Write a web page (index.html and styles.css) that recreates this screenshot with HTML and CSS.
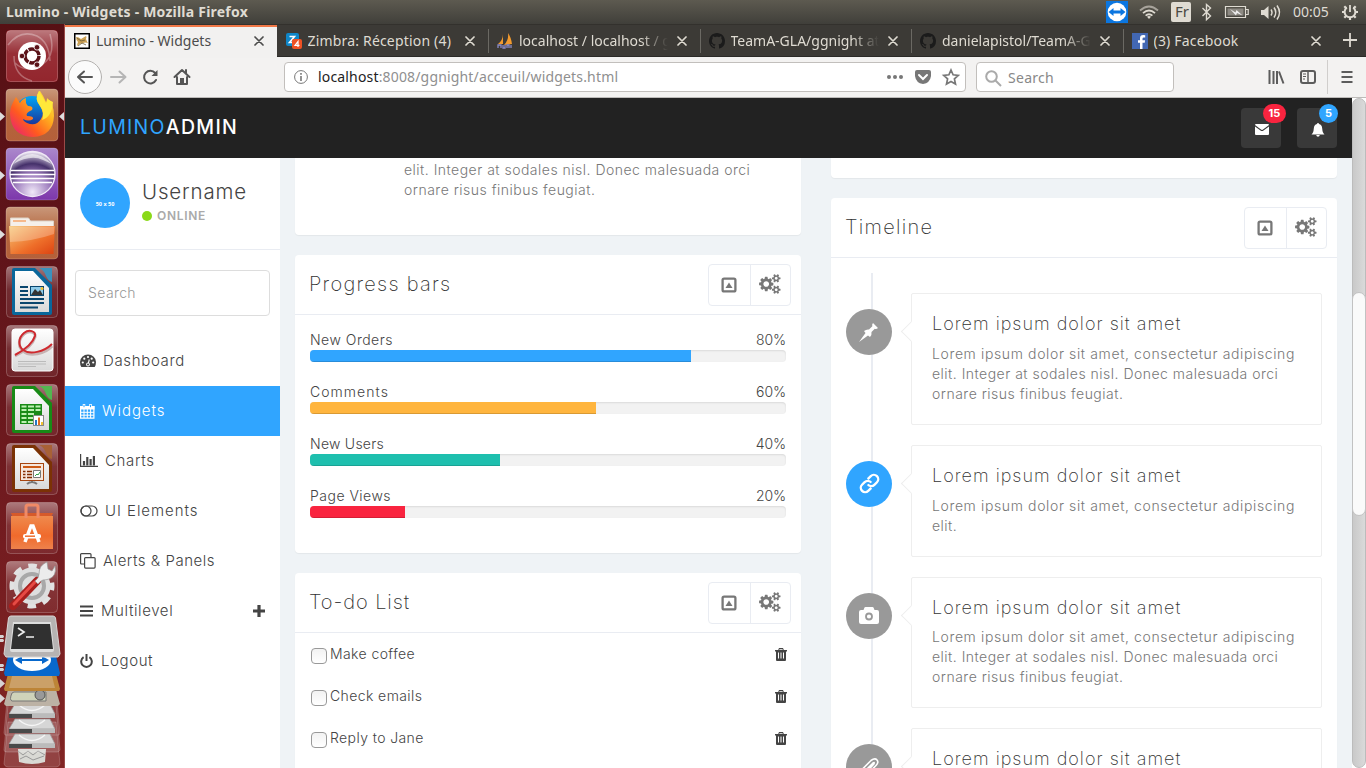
FILE: index.html
```html
<!DOCTYPE html>
<html lang="en">
<head>
<meta charset="utf-8">
<title>Lumino - Widgets</title>
<link rel="stylesheet" href="styles.css">
</head>
<body>
<svg width="0" height="0" class="defs">
  <defs>
    <linearGradient id="gloss" x1="0" y1="0" x2="0" y2="1"><stop offset="0" stop-color="#fff" stop-opacity=".42"/><stop offset=".45" stop-color="#fff" stop-opacity=".1"/><stop offset="1" stop-color="#fff" stop-opacity=".06"/></linearGradient>
    <linearGradient id="orangeTile" x1="0" y1="0" x2="0" y2="1"><stop offset="0" stop-color="#c9977a"/><stop offset=".5" stop-color="#b3653c"/><stop offset="1" stop-color="#b5603a"/></linearGradient>
    <linearGradient id="purpleTile" x1="0" y1="0" x2="0" y2="1"><stop offset="0" stop-color="#ab88cc"/><stop offset="1" stop-color="#7d37ab"/></linearGradient>
    <linearGradient id="folder" x1="0" y1="0" x2="1" y2="1"><stop offset="0" stop-color="#f6c877"/><stop offset=".6" stop-color="#ee6f2a"/><stop offset="1" stop-color="#dc4312"/></linearGradient>
    <linearGradient id="fox" x1="1" y1="0" x2="0" y2="1"><stop offset="0" stop-color="#fff44f"/><stop offset=".35" stop-color="#ffb01f"/><stop offset=".65" stop-color="#ff5a1f"/><stop offset="1" stop-color="#e31587"/></linearGradient>
    <linearGradient id="globe" x1="0" y1="0" x2="0" y2="1"><stop offset="0" stop-color="#00a5f5"/><stop offset="1" stop-color="#20218a"/></linearGradient>
    <radialGradient id="orb" cx=".5" cy=".9" r=".9"><stop offset="0" stop-color="#f0e8f8"/><stop offset=".45" stop-color="#9d7cbd"/><stop offset=".7" stop-color="#45306a"/><stop offset="1" stop-color="#f5f0fa"/></radialGradient>
    <linearGradient id="paper" x1="0" y1="0" x2="0" y2="1"><stop offset="0" stop-color="#fff"/><stop offset="1" stop-color="#d9d9d9"/></linearGradient>
    <linearGradient id="bag" x1="0" y1="0" x2="0" y2="1"><stop offset="0" stop-color="#ef8a4d"/><stop offset=".6" stop-color="#f06a2c"/><stop offset="1" stop-color="#ee824c"/></linearGradient>
    <g id="tile"><rect x="6.5" y="6.5" width="51" height="51" rx="4" fill="url(#gloss)" stroke="#fff" stroke-opacity=".22"/></g>
    <g id="running"><path d="M0 29v9l5-4.500z" fill="#ddd"/></g>
    <g id="mark-github"><path d="M8 0C3.580 0 0 3.580 0 8c0 3.540 2.290 6.530 5.470 7.590.4.070.55-.17.55-.38 0-.19-.01-.82-.01-1.490-2.010.37-2.530-.49-2.690-.94-.09-.23-.48-.94-.82-1.130-.28-.15-.68-.52-.01-.53.63-.01 1.080.58 1.230.82.72 1.210 1.870.87 2.330.66.07-.52.28-.87.51-1.070-1.780-.2-3.640-.89-3.640-3.950 0-.87.31-1.590.82-2.150-.08-.2-.36-1.020.08-2.120 0 0 .67-.21 2.200.82.64-.18 1.320-.27 2-.27s1.360.09 2 .27c1.530-1.040 2.200-.82 2.200-.82.44 1.100.16 1.920.08 2.120.51.56.82 1.270.82 2.150 0 3.070-1.870 3.750-3.650 3.950.29.25.54.73.54 1.480 0 1.070-.01 1.930-.01 2.200 0 .21.15.46.55.38A8.010 8.010 0 0 0 16 8c0-4.420-3.580-8-8-8z" fill="#1b1b1b"/></g>
    <g id="cogs"><path d="M896 896q0-106-75-181t-181-75-181 75-75 181 75 181 181 75 181-75 75-181zm768 512q0-52-38-90t-90-38-90 38-38 90q0 53 37.500 90.500t90.500 37.500 90.500-37.500 37.500-90.500zm0-1024q0-52-38-90t-90-38-90 38-38 90q0 53 37.500 90.500t90.500 37.500 90.500-37.500 37.500-90.500zm-384 421v185q0 10-7 19.500t-16 10.500l-155 24q-11 35-32 76 34 48 90 115 7 11 7 20 0 12-7 19-23 30-82.500 89.500t-78.500 59.500q-11 0-21-7l-115-90q-37 19-77 31-11 108-23 155-7 24-30 24h-186q-11 0-20-7.500t-10-17.500l-23-153q-34-10-75-31l-118 89q-7 7-20 7-11 0-21-8-144-133-144-160 0-9 7-19 10-14 41-53t47-61q-23-44-35-82l-152-24q-10-1-17-9.500t-7-19.500v-185q0-10 7-19.500t16-10.500l155-24q11-35 32-76-34-48-90-115-7-11-7-20 0-12 7-20 22-30 82-89t79-59q11 0 21 7l115 90q34-18 77-32 11-108 23-154 7-24 30-24h186q11 0 20 7.500t10 17.500l23 153q34 10 75 31l118-89q8-7 20-7 11 0 21 8 144 133 144 160 0 8-7 19-12 16-42 54t-45 60q23 48 34 82l152 23q10 2 17 10.500t7 19.500zm640 533v140q0 16-149 31-12 27-30 52 51 113 51 138 0 4-4 7-122 71-124 71-8 0-46-47t-52-68q-20 2-30 2t-30-2q-14 21-52 68t-46 47q-2 0-124-71-4-3-4-7 0-25 51-138-18-25-30-52-149-15-149-31v-140q0-16 149-31 13-29 30-52-51-113-51-138 0-4 4-7 4-2 35-20t59-34 30-16q8 0 46 46.500t52 67.500q20-2 30-2t30 2q51-71 92-112l6-2q4 0 124 70 4 3 4 7 0 25-51 138 17 23 30 52 149 15 149 31zm0-1024v140q0 16-149 31-12 27-30 52 51 113 51 138 0 4-4 7-122 71-124 71-8 0-46-47t-52-68q-20 2-30 2t-30-2q-14 21-52 68t-46 47q-2 0-124-71-4-3-4-7 0-25 51-138-18-25-30-52-149-15-149-31v-140q0-16 149-31 13-29 30-52-51-113-51-138 0-4 4-7 4-2 35-20t59-34 30-16q8 0 46 46.500t52 67.500q20-2 30-2t30 2q51-71 92-112l6-2q4 0 124 70 4 3 4 7 0 25-51 138 17 23 30 52 149 15 149 31z"/></g>
    <g id="close"><path d="M1 1l8 8M9 1l-8 8" fill="none" stroke="currentColor" stroke-width="1.700" stroke-linecap="round"/></g>
    <g id="trash"><path d="M0 2h3.200l.8-2h4l.8 2H12v1.500h-1V12q0 1-1 1H2q-1 0-1-1V3.500H0zM4.500 1.200L4.200 2h3.600l-.3-.8z" fill="#444" fill-rule="evenodd"/><path d="M3 4.500h1v6H3zM5.500 4.500h1v6h-1zM8 4.500h1v6H8z" fill="#fff"/></g>
  </defs>
</svg>

<header class="sysbar">
  <span class="win-title">Lumino - Widgets - Mozilla Firefox</span>
  <svg class="indicators" width="260" height="24" viewBox="1106 0 260 24">
    <rect x="1106" y="1" width="22" height="22" fill="#0b76e0"/><circle cx="1117" cy="12" r="9.300" fill="#fff"/><path d="M1108.500 12l5-4v2.600h7V8l5 4-5 4v-2.600h-7V16z" fill="#0b76e0"/>
    <g fill="none" stroke="#dfdbd2" stroke-width="1.800"><path d="M1140 10.500q9-8 18 0" stroke-opacity=".6"/><path d="M1143 13.200q6-5.500 12 0"/><path d="M1145.600 15.700q3.400-3 6.800 0"/></g><path d="M1149 19l-2-2.300q2-1.400 4 0z" fill="#dfdbd2"/>
    <rect x="1171" y="2" width="20" height="20" rx="2" fill="#dfdbd2"/>
    <path d="M1202.500 8l8 8-4 3.700V4.500l4 3.500-8 8" fill="none" stroke="#dfdbd2" stroke-width="1.400"/>
    <path d="M1225.500 6.500h20v11h-20zM1246 9.500h2.200v5h-2.200" fill="none" stroke="#dfdbd2" stroke-width="1.200"/><rect x="1227.500" y="8.500" width="16" height="7" fill="#8d8a83"/><path d="M1230 9l5.500 3.500 1-2.500 6 5.500-5.500-2.500-1 2.500z" fill="#eee"/>
    <path d="M1261 10h3l4.500-4v13l-4.500-4h-3z" fill="#dfdbd2"/><g fill="none" stroke="#dfdbd2" stroke-width="1.500"><path d="M1271 9.500q2 3 0 6M1274 7.500q3.500 5 0 10M1277 5.500q5 7 0 14"/></g>
    <g fill="none" stroke="#dfdbd2"><path d="M1346.800 7.600a5.400 5.400 0 1 0 6.400 0" stroke-width="2"/><path d="M1350 5v7" stroke-width="1.800"/><path d="M1342 12h2.500M1355.500 12h2.500M1350 17.500v2.500M1344.300 17.700l2-2M1355.700 17.700l-2-2M1344.300 6.300l2 2M1355.700 6.300l-2 2" stroke-width="2.200"/></g>
    <text x="1175" y="17" class="lang">Fr</text>
    <text x="1293" y="17" class="clock">00:05</text>
  </svg>
</header>

<div class="desktop">
<aside class="launcher">
  <svg width="65" height="59"><rect x="6" y="6" width="52" height="52" rx="4" fill="#8c1820"/><use href="#tile"/><g fill="none" stroke="#fff" stroke-opacity=".3" stroke-width="1.500"><path d="M8 21q12-16 29-9 12 6 13 25M50 10q7 24-12 33-14 5-23-4M14 32q0 20 18 25"/></g><circle cx="32" cy="32" r="14" fill="#fff"/><circle cx="32" cy="32" r="7" fill="none" stroke="#5a1218" stroke-width="3.500" stroke-dasharray="13.600 1.060"/><g fill="#5a1218" stroke="#fff" stroke-width=".8"><circle cx="22" cy="32" r="2.800"/><circle cx="37" cy="23.300" r="2.800"/><circle cx="37" cy="40.700" r="2.800"/></g></svg>
  <svg width="65" height="59"><rect x="6" y="6" width="52" height="52" rx="4" fill="url(#orangeTile)" stroke="#fff" stroke-opacity=".2"/><circle cx="32" cy="30" r="17" fill="url(#globe)"/><path d="M39 8q-5 8 1 15 5 7 1 13-5 8-14 4-4-2-4-4 6 3 10 0 1-3-6-3-2-3 5-6 2-4-4-4-3-3-2-8-5 2-6 5l-4-6q-6 9-6 17 1 22 23 23 20-1 21-21 0-13-7-18 0 3-1 4-3-7-6-11z" fill="url(#fox)"/><path d="M39 8q-5 8 1 15 5 7 2 14 10-3 11-18l-6-3q0 3-1 4-4-7-7-12z" fill="#ffe83a"/><use href="#running"/><path d="M64 29v9l-5-4.500z" fill="#ddd"/></svg>
  <svg width="65" height="59"><rect x="6" y="6" width="52" height="52" rx="4" fill="url(#purpleTile)" stroke="#fff" stroke-opacity=".2"/><circle cx="32.500" cy="32" r="22.500" fill="url(#orb)" stroke="#f0eaf6" stroke-width="1.300"/><path d="M13 22q19-20 39 0l-9-4q-12-6-30 4z" fill="#fff" opacity=".6"/><path d="M11 28.500h43M10 32.500h45M11 36.500h43M13 40.500h39" stroke="#fff" stroke-width="1.300"/><use href="#running"/></svg>
  <svg width="65" height="59"><rect x="6" y="6" width="52" height="52" rx="4" fill="url(#orangeTile)" stroke="#fff" stroke-opacity=".2"/><path d="M10.500 25v-8h18l2 3h23v8h-43z" fill="#f5f0ea" stroke="#ddd3c8"/><path d="M13 20h13" stroke="#f5b98c" stroke-width="2"/><path d="M9 25h46l-1.500 28h-43z" fill="url(#folder)"/><path d="M9.500 25.500h45L54 33q-20 7-44 8z" fill="#fff" opacity=".25"/><use href="#running"/></svg>
  <svg width="65" height="59"><use href="#tile"/><path d="M14 8h21l17 17v28q0 2-2 2H14q-2 0-2-2V10q0-2 2-2z" fill="#09679b"/><path d="M39 8h13v14q-4-1-6-6-2-6-7-8z" fill="#3b92bd"/><path d="M15 11h18l16 17v24H15z" fill="url(#paper)"/><path d="M20 27h8M20 31h8M20 35h8M20 39h24M20 43h24M20 47.500h18" stroke="#09466e" stroke-width="1.800"/><rect x="30.500" y="26.500" width="13" height="9" fill="#8ecbe9" stroke="#09466e"/><path d="M31 35l4-6 3 3 2-2 3 5z" fill="#333"/><circle cx="42" cy="28.500" r="1.500" fill="#f3c230"/></svg>
  <svg width="65" height="59"><use href="#tile"/><rect x="12" y="10" width="41" height="42" rx="3" fill="url(#paper)" stroke="#fff"/><path d="M15 37q17-9 20-19c1-5-6-7-11-3-6 5-6 13-1 17 7 6 22 3 29-5" fill="none" stroke="#c7b3b3" stroke-width="3"/><path d="M15 36q17-9 20-19c1-5-6-7-11-3-6 5-6 13-1 17 7 5 21 2 29-6" fill="none" stroke="#cf2a2f" stroke-width="2"/><path d="M18 42.500h28M18 45h28M18 47.500h18" stroke="#bbb"/></svg>
  <svg width="65" height="59"><use href="#tile"/><path d="M14 8h21l17 17v28q0 2-2 2H14q-2 0-2-2V10q0-2 2-2z" fill="#188a16"/><path d="M39 8h13v14q-4-1-6-6-2-6-7-8z" fill="#53b650"/><path d="M15 11h18l16 17v24H15z" fill="url(#paper)"/><rect x="20" y="26" width="22" height="20" fill="#188a16"/><path d="M21.500 27.500h5v2h-5zm6.500 0h6v2h-6zm7.500 0h5v2h-5zM21.500 31h5v2h-5zm6.500 0h6v2h-6zm7.500 0h5v2h-5zM21.500 35h5v2h-5zm6.500 0h6v2h-6zM21.500 39h5v2h-5zm6.500 0h6v2h-6zM21.500 43h5v2h-5zm6.500 0h6v2h-6z" fill="#bdf0b2"/><rect x="33.500" y="37.500" width="10" height="10" fill="#fff" stroke="#888"/><path d="M35 42h2v5h-2z" fill="#2577c4"/><path d="M38 39.500h2V47h-2z" fill="#e06c21"/><path d="M41 44h2v3h-2z" fill="#f3c230"/></svg>
  <svg width="65" height="59"><use href="#tile"/><path d="M14 8h21l17 17v28q0 2-2 2H14q-2 0-2-2V10q0-2 2-2z" fill="#7b3205"/><path d="M39 8h13v14q-4-1-6-6-2-6-7-8z" fill="#a86136"/><path d="M15 11h18l16 17v24H15z" fill="url(#paper)"/><rect x="20.500" y="26.500" width="23" height="17" fill="#f6e7dc" stroke="#a64510"/><path d="M23 30h18" stroke="#cc5a15" stroke-width="2"/><path d="M23 34.500h2.500M23 37.500h2.500M23 40.500h2.500M27 34.500h5M27 37.500h5M27 40.500h5" stroke="#842d00" stroke-width="1.700"/><path d="M33.500 33.500h7v7h-7z" fill="#fff" stroke="#777"/><path d="M35 39l2-2 1 1 2-3" fill="none" stroke="#31a043"/><path d="M32 44v2M27 47q5-4 10 0" stroke="#777" stroke-width="2" fill="none"/></svg>
  <svg width="65" height="59"><use href="#tile"/><path d="M11 17h42l-2 5H13z" fill="#d65a2a"/><path d="M11 20h42v33H11z" fill="url(#bag)"/><path d="M26 22V11q0-2 2-2h8q2 0 2 2v11" fill="none" stroke="#f08a66" stroke-width="3"/><path d="M25 46l6-16h2l6 16" fill="none" stroke="#fff" stroke-width="3.500"/><rect x="23" y="38" width="18" height="4.500" rx="2" fill="#fff"/><path d="M25 40.200h10" stroke="#ef6e30" stroke-width="1.500"/></svg>
  <svg width="65" height="59"><use href="#tile"/><circle cx="32" cy="31" r="20" fill="none" stroke="#e2e2e2" stroke-width="5" stroke-dasharray="8.500 7.200" stroke-dashoffset="4.250"/><circle cx="32" cy="31" r="18.500" fill="#dedede"/><circle cx="32" cy="31" r="12" fill="none" stroke="#a8a8a8" stroke-width="4"/><path d="M37 26l-24 25" stroke="#a81f1d" stroke-width="8" stroke-linecap="round"/><path d="M35 27L14 49" stroke="#e64a44" stroke-width="3" stroke-linecap="round"/><path d="M35 26q4-3 4-7 0-9 8-12l1 7 4 2 3-5q2 10-6 13-3 1-6 1-3 1-5 4z" fill="#ececec" stroke="#999" stroke-width=".7"/></svg>
  <svg width="65" height="154" viewBox="0 614 65 154">
    <path d="M8 722h48l4 42q-1 3-4 3H8q-3 0-4-3z" fill="#fff" fill-opacity=".14" stroke="#fff" stroke-opacity=".2"/>
    <path d="M18 749h28l-1 13q-13 4-26 0z" fill="#d9d9d4"/><path d="M18 751l5 4 5-4 5 4 5-4 7 4M20 759l6-3 7 4 11-4" fill="none" stroke="#999"/>
    <path d="M8 705h48l4 45q-1 2-3 2H7q-3 0-3-2zM8 690h48l4 43-1 2H5l-1-2z" fill="#fff" fill-opacity=".14" stroke="#fff" stroke-opacity=".2"/>
    <g id="drive"><path d="M15 704h35l5 10H9z" fill="#d6d6d6" stroke="#999" stroke-width=".7"/><path d="M19 705q13 11 26 0" fill="none" stroke="#f5f5f5" stroke-width="1.500"/><path d="M9 714h46v4H9z" fill="#4a4a4a"/><path d="M32 714h23v4H32z" fill="#bbb"/></g>
    <use href="#drive" y="15"/><use href="#drive" y="30"/>
    <path d="M8 690h48l4 14-2 2H6l-2-2z" fill="#bcb2a5"/><path d="M14 692h32v9H12q-3-1 0-8z" fill="#cfd3ba" stroke="#777"/><circle cx="40" cy="695" r="5" fill="#999" stroke="#555"/>
    <path d="M8 674h48l4 15-1 2H5l-1-2z" fill="#bd8437"/><path d="M12 676h40l3 12H9z" fill="#cba068"/>
    <path d="M8 656h48l4 17-1 3H5l-1-3z" fill="#0868cc"/><ellipse cx="32" cy="660" rx="19" ry="11" fill="#fff"/><path d="M15 660l7-4v3h20v-3l7 4-7 4v-3H22v3z" fill="#0868cc"/>
    <path d="M11 616h42q2 0 2.500 2l4.500 36-2 3H6l-2-3 4.500-36q.5-2 2.500-2z" fill="#b6b3b3" stroke="#d8d5d5"/><path d="M13 622h38l3 28q0 2-2 2H12q-2 0-2-2z" fill="#ddd"/><path d="M14 624h36l3 25H11z" fill="#303030"/><path d="M18 628l6 4-6 4M26 637h8" fill="none" stroke="#eee" stroke-width="1.700"/>
    <path d="M0 635h3q2 1.500 0 3H0zM0 639h3q2 1.500 0 3H0zM0 664h3q2 1.500 0 3H0zM0 668h3q2 1.500 0 3H0zM0 679v9l5-4.500zM0 694v9l5-4.500z" fill="#d6d2d2"/>
  </svg>
</aside>

<div class="browser">
  <nav class="tabs">
    <div class="tab active"><svg width="16" height="16"><rect x=".75" y=".75" width="14.500" height="14.500" fill="#fff" stroke="#000" stroke-width="1.500"/><path d="M2 4q3 0 5 2l5-3q1 1 0 3 1 3 2 4-3-1-5 0-3 0-6 3 0-2 1-4-2-2-2-5z" fill="#cda255"/><path d="M3 5l4 3 4-1M4 13l4-3 4 2" fill="none" stroke="#6a5a36" stroke-width=".8"/></svg><span class="tab-text">Lumino - Widgets</span><svg class="x" width="10" height="10"><use href="#close"/></svg></div>
    <div class="tab"><svg width="16" height="16"><rect width="13" height="13" rx="2" fill="#0f86c8"/><path d="M3.500 3.500h5l-5 6h5" fill="none" stroke="#fff" stroke-width="1.600"/><rect x="6" y="6" width="10" height="10" rx="2" fill="#ef5123"/><path d="M12 14V8.500L9 12.300h4.500" fill="none" stroke="#fff" stroke-width="1.200"/></svg><span class="tab-text mail">Zimbra: Réception (4)</span><svg class="x" width="10" height="10"><use href="#close"/></svg></div>
    <div class="tab"><svg width="16" height="16"><path d="M6 1Q6 7 1 11h5zM11 0q1 7-4 12l8-1Q14 4 11 0z" fill="#f29a2e"/><path d="M1 15v-3h3v3M6 12v3h2v-3M10 15v-3h2v3M14 12v3" fill="none" stroke="#8b8bc6" stroke-width="1.300"/></svg><span class="tab-text fade">localhost / localhost / g</span><svg class="x" width="10" height="10"><use href="#close"/></svg></div>
    <div class="tab"><svg width="16" height="16"><use href="#mark-github"/></svg><span class="tab-text fade">TeamA-GLA/ggnight at</span><svg class="x" width="10" height="10"><use href="#close"/></svg></div>
    <div class="tab"><svg width="16" height="16"><use href="#mark-github"/></svg><span class="tab-text fade">danielapistol/TeamA-G</span><svg class="x" width="10" height="10"><use href="#close"/></svg></div>
    <div class="tab"><svg width="16" height="16"><rect width="16" height="16" fill="#4267b2"/><path d="M10.500 16V9.800h2.200l.4-2.500h-2.600V5.700q0-1.200 1.300-1.200h1.400V2.300q-5.200-1-5.200 3v2H6v2.500h2V16z" fill="#fff"/></svg><span class="tab-text mail">(3) Facebook</span><svg class="x" width="10" height="10"><use href="#close"/></svg></div>
    <svg class="newtab" width="14" height="14"><path d="M7 0v14M0 7h14" stroke="#ddd9d0" stroke-width="1.800"/></svg>
  </nav>
  <div class="toolbar">
    <div class="nav-buttons">
      <svg width="140" height="40" viewBox="65 57 140 40" fill="none" stroke-linecap="round" stroke-linejoin="round"><circle cx="85" cy="77" r="16.500" fill="#fbfbfb" stroke="#b3b1af"/><path d="M92 77H79M84 71.500L78 77l6 5.500" stroke="#555" stroke-width="2"/><path d="M111 77h13M119.500 71.500l6 5.500-6 5.500" stroke="#b5b5b5" stroke-width="2"/><path d="M156 80a6.300 6.300 0 1 1-.8-7" stroke="#555" stroke-width="2"/><path d="M157.500 70v6h-6z" fill="#555"/><path d="M174.500 77l7.500-7 7.500 7M177 77v7h10v-7M186 70v3" stroke="#555" stroke-width="2"/><path d="M180 78h4v6h-4z" fill="#555"/></svg>
    </div>
    <div class="urlbar">
      <svg width="14" height="14" fill="none" stroke="#777"><circle cx="7" cy="7" r="6.400"/><path d="M7 6v5M7 3v1.700" stroke-width="1.600"/></svg>
      <span class="url"><b>localhost</b>:8008/ggnight/acceuil/widgets.html</span>
      <svg class="url-actions" width="73" height="18" viewBox="887 68 73 18"><g fill="#777"><circle cx="889" cy="77" r="2"/><circle cx="895" cy="77" r="2"/><circle cx="901" cy="77" r="2"/><path d="M917 70h12q2 0 2 2v4q-1 7-8 8-7-1-8-8v-4q0-2 2-2z"/></g><path d="M919 75l4 4 4-4" fill="none" stroke="#fff" stroke-width="2" stroke-linecap="round"/><path d="M951 70l2.100 4.800 5.200.6-3.900 3.500 1.100 5.100-4.500-2.600-4.500 2.600 1.100-5.100-3.900-3.500 5.200-.6z" fill="none" stroke="#777" stroke-width="1.700"/></svg>
    </div>
    <div class="searchbar"><svg width="17" height="17" fill="none" stroke="#aaa" stroke-width="2"><circle cx="6.500" cy="6.500" r="5.300"/><path d="M10.500 10.500l5.500 5.500"/></svg><span class="search-text">Search</span></div>
    <svg class="tools" width="100" height="40" viewBox="1266 57 100 40" fill="none" stroke="#5c5c5c" stroke-width="2"><path d="M1269.500 70v14M1273.500 71v13M1277 71v13M1279 71.500l4.500 12"/><rect x="1301" y="71" width="14" height="12" rx="2"/><path d="M1308 71v12" stroke-width="1.500"/><path d="M1303 74h3M1303 76.500h3M1303 79h2" stroke-width="1"/><path d="M1327.500 60v34" stroke="#d0cecc" stroke-width="1"/><path d="M1341.500 72h11M1341.500 77h11M1341.500 82h11"/></svg>
  </div>

  <div class="viewport">
    <div class="page">
      <div class="navbar">
        <div class="brand"><span>LUMINO</span><em>ADMIN</em></div>
        <div class="alerts">
          <a class="alert"><svg width="14" height="11"><path d="M0 1q0-1 1-1h12q1 0 1 1L8 5.500q-1 .8-2 0zM0 2.600l5.500 4q1.500 1 3 0l5.500-4V10q0 1-1 1H1q-1 0-1-1z" fill="#fff"/></svg><span class="badge red">15</span></a>
          <a class="alert"><svg width="14" height="14"><path d="M7 0q1 0 1 1 3 .8 3.200 4.500Q11.500 10 13.500 11.500H.5Q2.500 10 2.800 5.500 3 1.800 6 1q0-1 1-1zM5.200 12h3.600q-.3 1.800-1.800 1.800T5.200 12z" fill="#fff"/></svg><span class="badge blue">5</span></a>
        </div>
      </div>
      <div class="content">
        <aside class="sidebar">
          <div class="profile">
            <div class="avatar">50 x 50</div>
            <div><div class="username">Username</div><div class="status"><i class="dot"></i><span>ONLINE</span></div></div>
          </div>
          <div class="side-search">Search</div>
          <ul class="menu">
            <li><svg width="16" height="14"><path d="M0 8a8 7.500 0 0 1 16 0q0 3-1.300 5H1.300Q0 11 0 8z" fill="#444"/><g fill="#fff"><circle cx="2.800" cy="8.500" r="1.100"/><circle cx="4.300" cy="4.700" r="1.100"/><circle cx="8" cy="3" r="1.100"/><circle cx="11.700" cy="4.700" r="1.100"/><circle cx="13.200" cy="8.500" r="1.100"/><circle cx="8" cy="10.500" r="1.900"/></g><path d="M8 10.500L9.300 5.500" stroke="#fff" stroke-width="1.100"/><circle cx="8" cy="10.500" r="1" fill="#444"/></svg><span>Dashboard</span></li>
            <li class="on"><svg width="15" height="15"><path d="M.6 2.600h13.300v11.600H.6z" fill="none" stroke="#fff" stroke-width="1.200"/><path d="M0 2h14.500v3.500H0z" fill="#fff"/><path d="M.6 8.300h13.300M.6 11.200h13.300M4 5v9M7.300 5v9M10.600 5v9" stroke="#fff"/><path d="M4 0v4M10.500 0v4" stroke="#fff" stroke-width="2.500"/><path d="M4 .8v2.400M10.500 .8v2.400" stroke="#30a5ff"/></svg><span class="wide">Widgets</span></li>
            <li><svg width="18" height="14"><path d="M.6 0v12.400H18" fill="none" stroke="#444" stroke-width="1.200"/><path d="M4 7v4.500M7.300 3v8.500M10.600 5v6.500M13.900 2v9.500" stroke="#444" stroke-width="2.200"/></svg><span>Charts</span></li>
            <li><svg width="18" height="12" fill="none" stroke="#444" stroke-width="1.200"><path d="M6 1a5 5 0 0 0 0 10h6a5 5 0 0 0 0-10z"/><circle cx="6" cy="6" r="5"/></svg><span class="wide">UI Elements</span></li>
            <li><svg width="16" height="16" fill="none" stroke="#444" stroke-width="1.200"><rect x="4.600" y="4.600" width="10.500" height="10.500" rx="1"/><path d="M4 11H1.600q-1 0-1-1V1.600q0-1 1-1H10q1 0 1 1V4"/></svg><span class="snug">Alerts &amp; Panels</span></li>
            <li><svg width="13" height="12"><path d="M0 1.500h13M0 6h13M0 10.500h13" stroke="#444" stroke-width="2.200"/></svg><span class="indent">Multilevel</span><svg class="plus" width="12" height="12"><path d="M6 0v12M0 6h12" stroke="#444" stroke-width="3.200"/></svg></li>
            <li><svg width="13" height="14" fill="none" stroke="#444" stroke-width="2"><path d="M3.600 3.200a5.300 5.300 0 1 0 5.800 0"/><path d="M6.500 0v7"/></svg><span class="indent">Logout</span></li>
          </ul>
        </aside>
        <main class="columns">
          <section class="col">
            <div class="card article"><p>elit. Integer at sodales nisl. Donec malesuada orci<br>ornare risus finibus feugiat.</p></div>
            <div class="card progress-card">
              <div class="card-head"><h2>Progress bars</h2><div class="btns"><span><svg width="16" height="16"><rect x="1.600" y="1.600" width="12.800" height="12.800" rx="1.500" fill="none" stroke="#777" stroke-width="2.300"/><path d="M4.500 11L8 5.500l3.500 5.500z" fill="#777"/></svg></span><span><svg width="23" height="20" viewBox="0 0 2048 1792" fill="#777"><use href="#cogs"/></svg></span></div></div>
              <div class="bars">
                <div class="bar-label"><span>New Orders</span><span class="pc">80%</span></div><div class="track"><div class="fill f-blue" style="width:80%"></div></div>
                <div class="bar-label"><span class="loose">Comments</span><span class="pc">60%</span></div><div class="track"><div class="fill f-orange" style="width:60%"></div></div>
                <div class="bar-label"><span class="tight">New Users</span><span class="pc">40%</span></div><div class="track"><div class="fill f-teal" style="width:40%"></div></div>
                <div class="bar-label"><span>Page Views</span><span class="pc">20%</span></div><div class="track"><div class="fill f-red" style="width:20%"></div></div>
              </div>
            </div>
            <div class="card todo-card">
              <div class="card-head"><h2 class="h-todo">To-do List</h2><div class="btns"><span><svg width="16" height="16"><rect x="1.600" y="1.600" width="12.800" height="12.800" rx="1.500" fill="none" stroke="#777" stroke-width="2.300"/><path d="M4.500 11L8 5.500l3.500 5.500z" fill="#777"/></svg></span><span><svg width="23" height="20" viewBox="0 0 2048 1792" fill="#777"><use href="#cogs"/></svg></span></div></div>
              <div class="todo"><i class="check"></i><span>Make coffee</span><svg width="12" height="13"><use href="#trash"/></svg></div>
              <div class="todo"><i class="check"></i><span>Check emails</span><svg width="12" height="13"><use href="#trash"/></svg></div>
              <div class="todo"><i class="check"></i><span>Reply to Jane</span><svg width="12" height="13"><use href="#trash"/></svg></div>
            </div>
          </section>
          <section class="col">
            <div class="card stub"></div>
            <div class="card timeline-card">
              <div class="card-head"><h2>Timeline</h2><div class="btns"><span><svg width="16" height="16"><rect x="1.600" y="1.600" width="12.800" height="12.800" rx="1.500" fill="none" stroke="#777" stroke-width="2.300"/><path d="M4.500 11L8 5.500l3.500 5.500z" fill="#777"/></svg></span><span><svg width="23" height="20" viewBox="0 0 2048 1792" fill="#777"><use href="#cogs"/></svg></span></div></div>
              <div class="timeline">
                <div class="event"><div class="mark"><svg width="20" height="20"><path d="M0 20l6.500-9-1.500-2q2.500-2 5-1.500l3.300-3.300q-.6-1.600.7-3.200L19 6q-1.600 1.300-3.200.7L12.500 10q.5 2.500-1.500 5l-2-1.500z" fill="#fff"/></svg></div><div class="panel"><h4>Lorem ipsum dolor sit amet</h4><p><span class="first">Lorem ipsum dolor sit amet, consectetur adipiscing</span><br>elit. Integer at sodales nisl. Donec malesuada orci<br>ornare risus finibus feugiat.</p></div></div>
                <div class="event"><div class="mark blue"><svg width="21" height="21" viewBox="0 0 24 24" fill="none" stroke="#fff" stroke-width="2.700"><path d="M10 13a5 5 0 0 0 7.540.540l3-3a5 5 0 0 0-7.070-7.070l-3.500 3.500"/><path d="M14 11a5 5 0 0 0-7.540-.540l-3 3a5 5 0 0 0 7.070 7.070l3.500-3.500"/></svg></div><div class="panel"><h4>Lorem ipsum dolor sit amet</h4><p><span class="first">Lorem ipsum dolor sit amet, consectetur adipiscing</span><br>elit.</p></div></div>
                <div class="event"><div class="mark"><svg width="20" height="17"><path d="M2 3h2.500l1-2.500Q5.700 0 6.500 0h7q.8 0 1 .5l1 2.500H18q2 0 2 2v10q0 2-2 2H2q-2 0-2-2V5q0-2 2-2z" fill="#fff"/><circle cx="10" cy="9.500" r="3" fill="none" stroke="#999" stroke-width="1.800"/></svg></div><div class="panel"><h4>Lorem ipsum dolor sit amet</h4><p><span class="first">Lorem ipsum dolor sit amet, consectetur adipiscing</span><br>elit. Integer at sodales nisl. Donec malesuada orci<br>ornare risus finibus feugiat.</p></div></div>
                <div class="event"><div class="mark"><svg width="20" height="20" fill="none" stroke="#fff" stroke-width="1.600"><path d="M6 14l8-8q1.800-1.400 1 .8L7.500 15q-3 3-4.500 1t1-4.500l8-8Q16 .5 18 3t-1 5.500L9.500 16"/></svg></div><div class="panel"><h4>Lorem ipsum dolor sit amet</h4></div></div>
              </div>
            </div>
          </section>
        </main>
      </div>
    </div>
    <div class="scrollbar"><div class="thumb"></div></div>
  </div>
</div>
</div>
</body>
</html>
```
FILE: styles.css
```css
* { box-sizing: border-box; }
body { margin: 0; width: 1366px; height: 768px; overflow: hidden; display: flex; flex-direction: column; font-family: Inter, "Noto Sans", sans-serif; font-size: 14px; line-height: 20px; color: #444; }
.defs { position: absolute; }
svg { display: block; flex: none; }
h2, h4, p, ul { margin: 0; padding: 0; font-weight: 300; }
h2, span, text { white-space: nowrap; }

.sysbar { height: 24px; flex: none; display: flex; justify-content: space-between; align-items: center; padding-left: 6px; background: linear-gradient(#5d5a50, #403f3a); font-family: "Noto Sans", sans-serif; }
.win-title { font-weight: 700; color: #dfdbd2; font-size: 14px; letter-spacing: .22px; }
.lang { font: 15px "Noto Sans", sans-serif; fill: #4a4843; }
.clock { font: 14px "Noto Sans", sans-serif; fill: #dfdbd2; }

.desktop { display: flex; flex: 1; min-height: 0; }
.launcher { width: 65px; flex: none; background: linear-gradient(#571014, #5f141a 30%, #741c20 70%, #812524); border-right: 1px solid #9a4a48; display: flex; flex-direction: column; }
.launcher svg { margin-right: -1px; }
.browser { flex: 1; min-width: 0; display: flex; flex-direction: column; }

.tabs { height: 33px; flex: none; display: flex; background: #3c3a36; font-family: "Noto Sans", sans-serif; font-size: 14px; color: #dfdbd2; border-top: 1px solid #33312d; border-bottom: 1px solid #2b2a27; }
.tab { width: 211.500px; flex: none; display: flex; align-items: center; padding: 0 13px 0 9px; gap: 6px; position: relative; }
.tab + .tab:not(:nth-child(2))::before { content: ""; position: absolute; left: 0; top: 4px; width: 1px; height: 24px; background: #6b6963; }
.tab.active { background: #f2f1f0; color: #4c4c4c; border-top: 2px solid #f07746; height: 33px; padding-bottom: 3px; }
.tab-text { flex: 1; overflow: hidden; }
.tab-text.mail { letter-spacing: .18px; }
.tab-text.fade { -webkit-mask-image: linear-gradient(90deg, #000 80%, transparent 98%); mask-image: linear-gradient(90deg, #000 80%, transparent 98%); }
.newtab { margin: 8px 0 0 9px; }

.toolbar { height: 41px; flex: none; display: flex; align-items: center; background: #f3f2f1; border-bottom: 1px solid #bdbbb9; font-family: "Noto Sans", sans-serif; }
.nav-buttons { width: 219px; }
.urlbar { width: 682px; height: 30px; display: flex; align-items: center; padding: 0 5px 0 9px; gap: 10px; background: #fff; border: 1px solid #c2bfbc; border-radius: 4px; }
.url { flex: none; color: #8f8f8f; letter-spacing: .165px; }
.url b { font-weight: 400; color: #222; }
.url-actions { margin-left: auto; }
.searchbar { width: 198px; height: 30px; margin-left: 10px; display: flex; align-items: center; padding: 2px 0 0 8px; gap: 6px; background: #fff; border: 1px solid #c2bfbc; border-radius: 4px; color: #888; letter-spacing: .28px; }
.tools { margin-left: auto; }

.viewport { flex: 1; min-height: 0; display: flex; }
.page { width: 1287px; display: flex; flex-direction: column; background: #eff3f6; }
.scrollbar { width: 14px; border: 1px solid #bcbcbc; border-radius: 7px; padding-top: 193px; background: linear-gradient(90deg, #c9c9c9, #dadada); }
.thumb { height: 224px; margin: 0 -1px; background: #fafafa; border: 1px solid #c2c2c2; border-radius: 7px; }

.navbar { height: 60px; flex: none; background: #222; display: flex; justify-content: space-between; padding: 0 15px; }
.brand { display: flex; align-items: center; height: 57px; font-size: 19.500px; color: #30a5ff; letter-spacing: 1.300px; }
.brand em { font-style: normal; color: #fff; font-weight: 500; }
.alerts { display: flex; gap: 16px; padding-top: 10px; }
.alert { position: relative; width: 40px; height: 40px; border-radius: 4px; background: #393939; display: flex; align-items: center; justify-content: center; padding: 3px 0 0 1px; }
.badge { position: absolute; top: -4px; right: -5px; height: 19px; min-width: 19px; border-radius: 10px; color: #fff; font-size: 11px; font-weight: 700; line-height: 19px; text-align: center; }
.red { background: #f9243f; width: 23px; }
.badge.blue { background: #30a5ff; right: -1px; }

.content { flex: 1; min-height: 0; display: flex; }
.sidebar { width: 215px; flex: none; background: #fff; }
.profile { height: 92px; display: flex; gap: 12px; padding: 20px 15px; border-bottom: 1px solid #e9ecf2; }
.avatar { width: 50px; height: 50px; border-radius: 50%; background: #30a5ff; color: #fff; font: 700 5.500px/53px "Noto Sans", sans-serif; text-align: center; }
.username { font-size: 20.500px; font-weight: 300; line-height: 28px; letter-spacing: .85px; }
.status { display: flex; align-items: center; gap: 5px; color: #aaa; font-size: 12px; font-weight: 600; line-height: 20px; letter-spacing: .69px; }
.dot { width: 10px; height: 10px; border-radius: 50%; background: #8ad919; }
.side-search { margin: 20px 10px; height: 46px; border: 1px solid #ddd; border-radius: 4px; padding: 12px; color: #999; font-weight: 300; letter-spacing: .39px; }
.menu { list-style: none; }
.menu li { height: 50px; display: flex; align-items: center; padding: 0 15px; gap: 7px; font-size: 15px; font-weight: 300; letter-spacing: .65px; }
.menu li.on { background: #30a5ff; color: #fff; }
.menu .wide { letter-spacing: .95px; }
.menu .snug { letter-spacing: .52px; }
.menu .indent { margin-left: 1px; letter-spacing: .6px; }
.menu .plus { margin-left: auto; }

.columns { display: flex; gap: 30px; padding: 0 15px; }
.col { width: 506px; display: flex; flex-direction: column; gap: 20px; }
.card { background: #fff; border-radius: 4px; box-shadow: 0 1px 1px rgba(0,0,0,.05); flex: none; }
.article { height: 77px; border-radius: 0 0 4px 4px; padding: 2px 0 0 109px; }
.article p, .panel p { color: #777; font-weight: 300; line-height: 20px; white-space: nowrap; letter-spacing: .49px; }
.panel .first { letter-spacing: .626px; }
.stub { height: 20px; border-radius: 0 0 4px 4px; }
.progress-card { height: 298px; }
.todo-card { height: 300px; }
.timeline-card { height: 700px; }
.card-head { height: 60px; display: flex; justify-content: space-between; align-items: center; padding: 0 10px 0 14px; border-bottom: 1px solid #e9ecf2; }
.card-head h2 { font-size: 20px; font-weight: 200; letter-spacing: 1.270px; padding-bottom: 1px; color: #333; }
.card-head .h-todo { letter-spacing: .9px; }
.btns { display: flex; border: 1px solid #e9ecf2; border-radius: 4px; height: 42px; width: 83px; }
.btns span { flex: 1; display: flex; align-items: center; justify-content: center; padding-right: 1px; }
.btns span + span { border-left: 1px solid #e9ecf2; padding: 0 0 2px; }
.bars { padding: 15px; }
.bar-label { display: flex; justify-content: space-between; font-weight: 300; letter-spacing: .49px; }
.bar-label .loose { letter-spacing: 1.050px; }
.bar-label .tight { letter-spacing: .25px; }
.bar-label .pc { letter-spacing: -.1px; }
.track { height: 12px; margin-bottom: 20px; background: #f2f2f2; border-radius: 4px; overflow: hidden; box-shadow: inset 0 1px 2px rgba(0,0,0,.1); }
.fill { height: 12px; box-shadow: inset 0 -1px 0 rgba(0,0,0,.15); }
.f-blue { background: #30a5ff; }
.f-orange { background: #ffb53e; }
.f-teal { background: #1ebfae; }
.f-red { background: #f9243f; }
.todo { height: 42px; display: flex; align-items: center; padding: 0 14px 0 16px; gap: 3px; font-weight: 300; letter-spacing: .4px; }
.todo svg { margin-left: auto; }
.check { width: 16px; height: 16px; margin-top: 4px; border: 1px solid #999; border-radius: 4px; background: linear-gradient(#f2f2f2, #fff); }

.timeline { padding: 35px 15px 0; display: flex; flex-direction: column; gap: 20px; background: linear-gradient(#e9ecf2, #e9ecf2) 40px 15px / 2px 100% no-repeat; }
.event { display: flex; gap: 19px; }
.mark { width: 46px; height: 46px; margin-top: 16px; border-radius: 50%; background: #999; display: flex; align-items: center; justify-content: center; }
.mark.blue { background: #30a5ff; }
.panel { position: relative; flex: 1; border: 1px solid #eee; border-radius: 2px; padding: 20px; }
.panel::before { content: ""; position: absolute; left: -8px; top: 30px; width: 14px; height: 14px; background: #fff; border: 1px solid #eee; border-width: 0 0 1px 1px; transform: rotate(45deg); }
.panel h4 { font-size: 18px; font-weight: 200; line-height: 19.800px; margin-bottom: 10px; white-space: nowrap; letter-spacing: 1px; color: #333; }
```
